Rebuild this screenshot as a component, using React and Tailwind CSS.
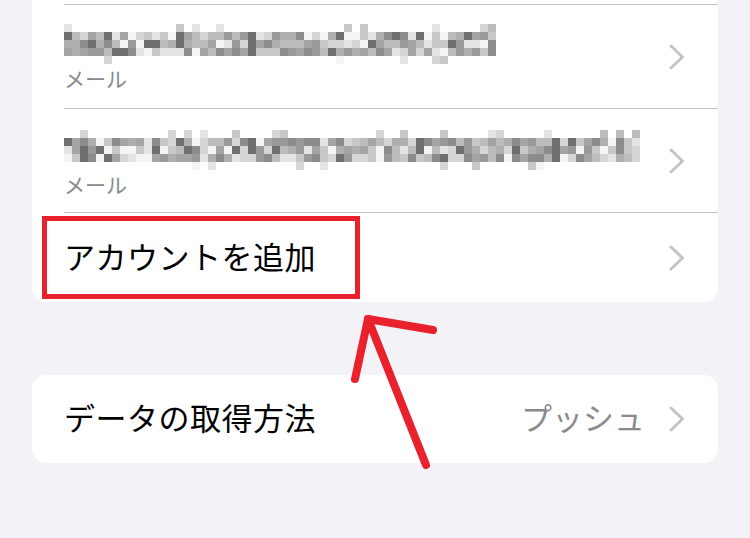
import React from "react";

const font = { fontFamily: '"Noto Sans CJK JP", "Noto Sans", sans-serif' };

// pixelated (mosaic) email address, drawn as a picture
function makeCells(cols, seed) {
  let s = seed;
  const rnd = () => {
    s = (s * 16807) % 2147483647;
    return (s - 1) / 2147483646;
  };
  const greys = ["#6f6f6f", "#8c8c8c", "#999999", "#a4a4a4", "#afafaf", "#bcbcbc", "#c8c8c8", "#d6d6d6", "#e4e4e4", "#f4f4f4"];
  const cells = [];
  for (let c = 0; c < cols; c++) {
    for (let r = 1; r <= 3; r++) {
      const g = greys[Math.floor(rnd() * greys.length)];
      cells.push({ c, r, g });
    }
    if (rnd() < 0.18) cells.push({ c, r: 0, g: greys[5 + Math.floor(rnd() * 4)] });
    if (rnd() < 0.1) cells.push({ c, r: 4, g: greys[6 + Math.floor(rnd() * 4)] });
  }
  return cells;
}

const Mosaic = ({ cols, seed }) => {
  const cells = makeCells(cols, seed);
  return (
    <svg width={cols * 8} height={40} viewBox={`0 0 ${cols * 8} 40`} className="block">
      {cells.map((x, i) => (
        <rect key={i} x={x.c * 8} y={x.r * 8} width={8} height={8} fill={x.g} />
      ))}
    </svg>
  );
};

const Chevron = () => (
  <svg width="16" height="26" viewBox="0 0 16 26" className="shrink-0">
    <path d="M2 2 L13.5 13 L2 24" fill="none" stroke="#c4c4c7" strokeWidth="3" strokeLinecap="round" strokeLinejoin="round" />
  </svg>
);

export default function App() {
  return (
    <div className="relative w-[750px] h-[538px] overflow-hidden bg-[#f2f2f7] px-[32px]" style={font}>
      {/* accounts card (top is cut off) */}
      <div className="bg-white rounded-b-[14px] pt-[4px]">
        <div className="ml-[32px] border-t border-[#c6c6c8] h-[104px] flex items-center pr-[33px]">
          <div className="flex-1 pt-[3px]">
            <Mosaic cols={54} seed={11} />
            <div className="text-[21px] leading-[28px] text-[#8a8a8e]">メール</div>
          </div>
          <Chevron />
        </div>
        <div className="ml-[32px] border-t border-[#c6c6c8] h-[104px] flex items-center pr-[33px]">
          <div className="flex-1 pt-[7px]">
            <Mosaic cols={72} seed={29} />
            <div className="text-[21px] leading-[28px] text-[#8a8a8e]">メール</div>
          </div>
          <Chevron />
        </div>
        <div className="ml-[32px] border-t border-[#c6c6c8] h-[90px] flex items-center pr-[33px]">
          <div className="flex-1 text-[31px] leading-none text-black tracking-[0.5px] pb-[4px]">アカウントを追加</div>
          <Chevron />
        </div>
      </div>

      {/* fetch method card */}
      <div className="mt-[73px] bg-white rounded-[14px] h-[88px] flex items-center pl-[32px] pr-[33px]">
        <div className="flex-1 text-[31px] leading-none text-black tracking-[0.5px] pb-[5px]">データの取得方法</div>
        <div className="text-[31px] leading-none text-[#8a8a8e] mr-[24px] pb-[5px]">プッシュ</div>
        <Chevron />
      </div>

      {/* red annotation box */}
      <div className="absolute left-[42px] top-[216px] w-[318px] h-[83px] border-[5px] border-[#e8212d]" />

      {/* red arrow */}
      <svg className="absolute left-0 top-0 pointer-events-none" width="750" height="538" viewBox="0 0 750 538">
        <g fill="none" stroke="#e8212d" strokeWidth="8" strokeLinecap="round" strokeLinejoin="round">
          <path d="M426 465 L368 319" />
          <path d="M368 319 L433 330" />
          <path d="M368 319 L355 379" />
        </g>
      </svg>
    </div>
  );
}
